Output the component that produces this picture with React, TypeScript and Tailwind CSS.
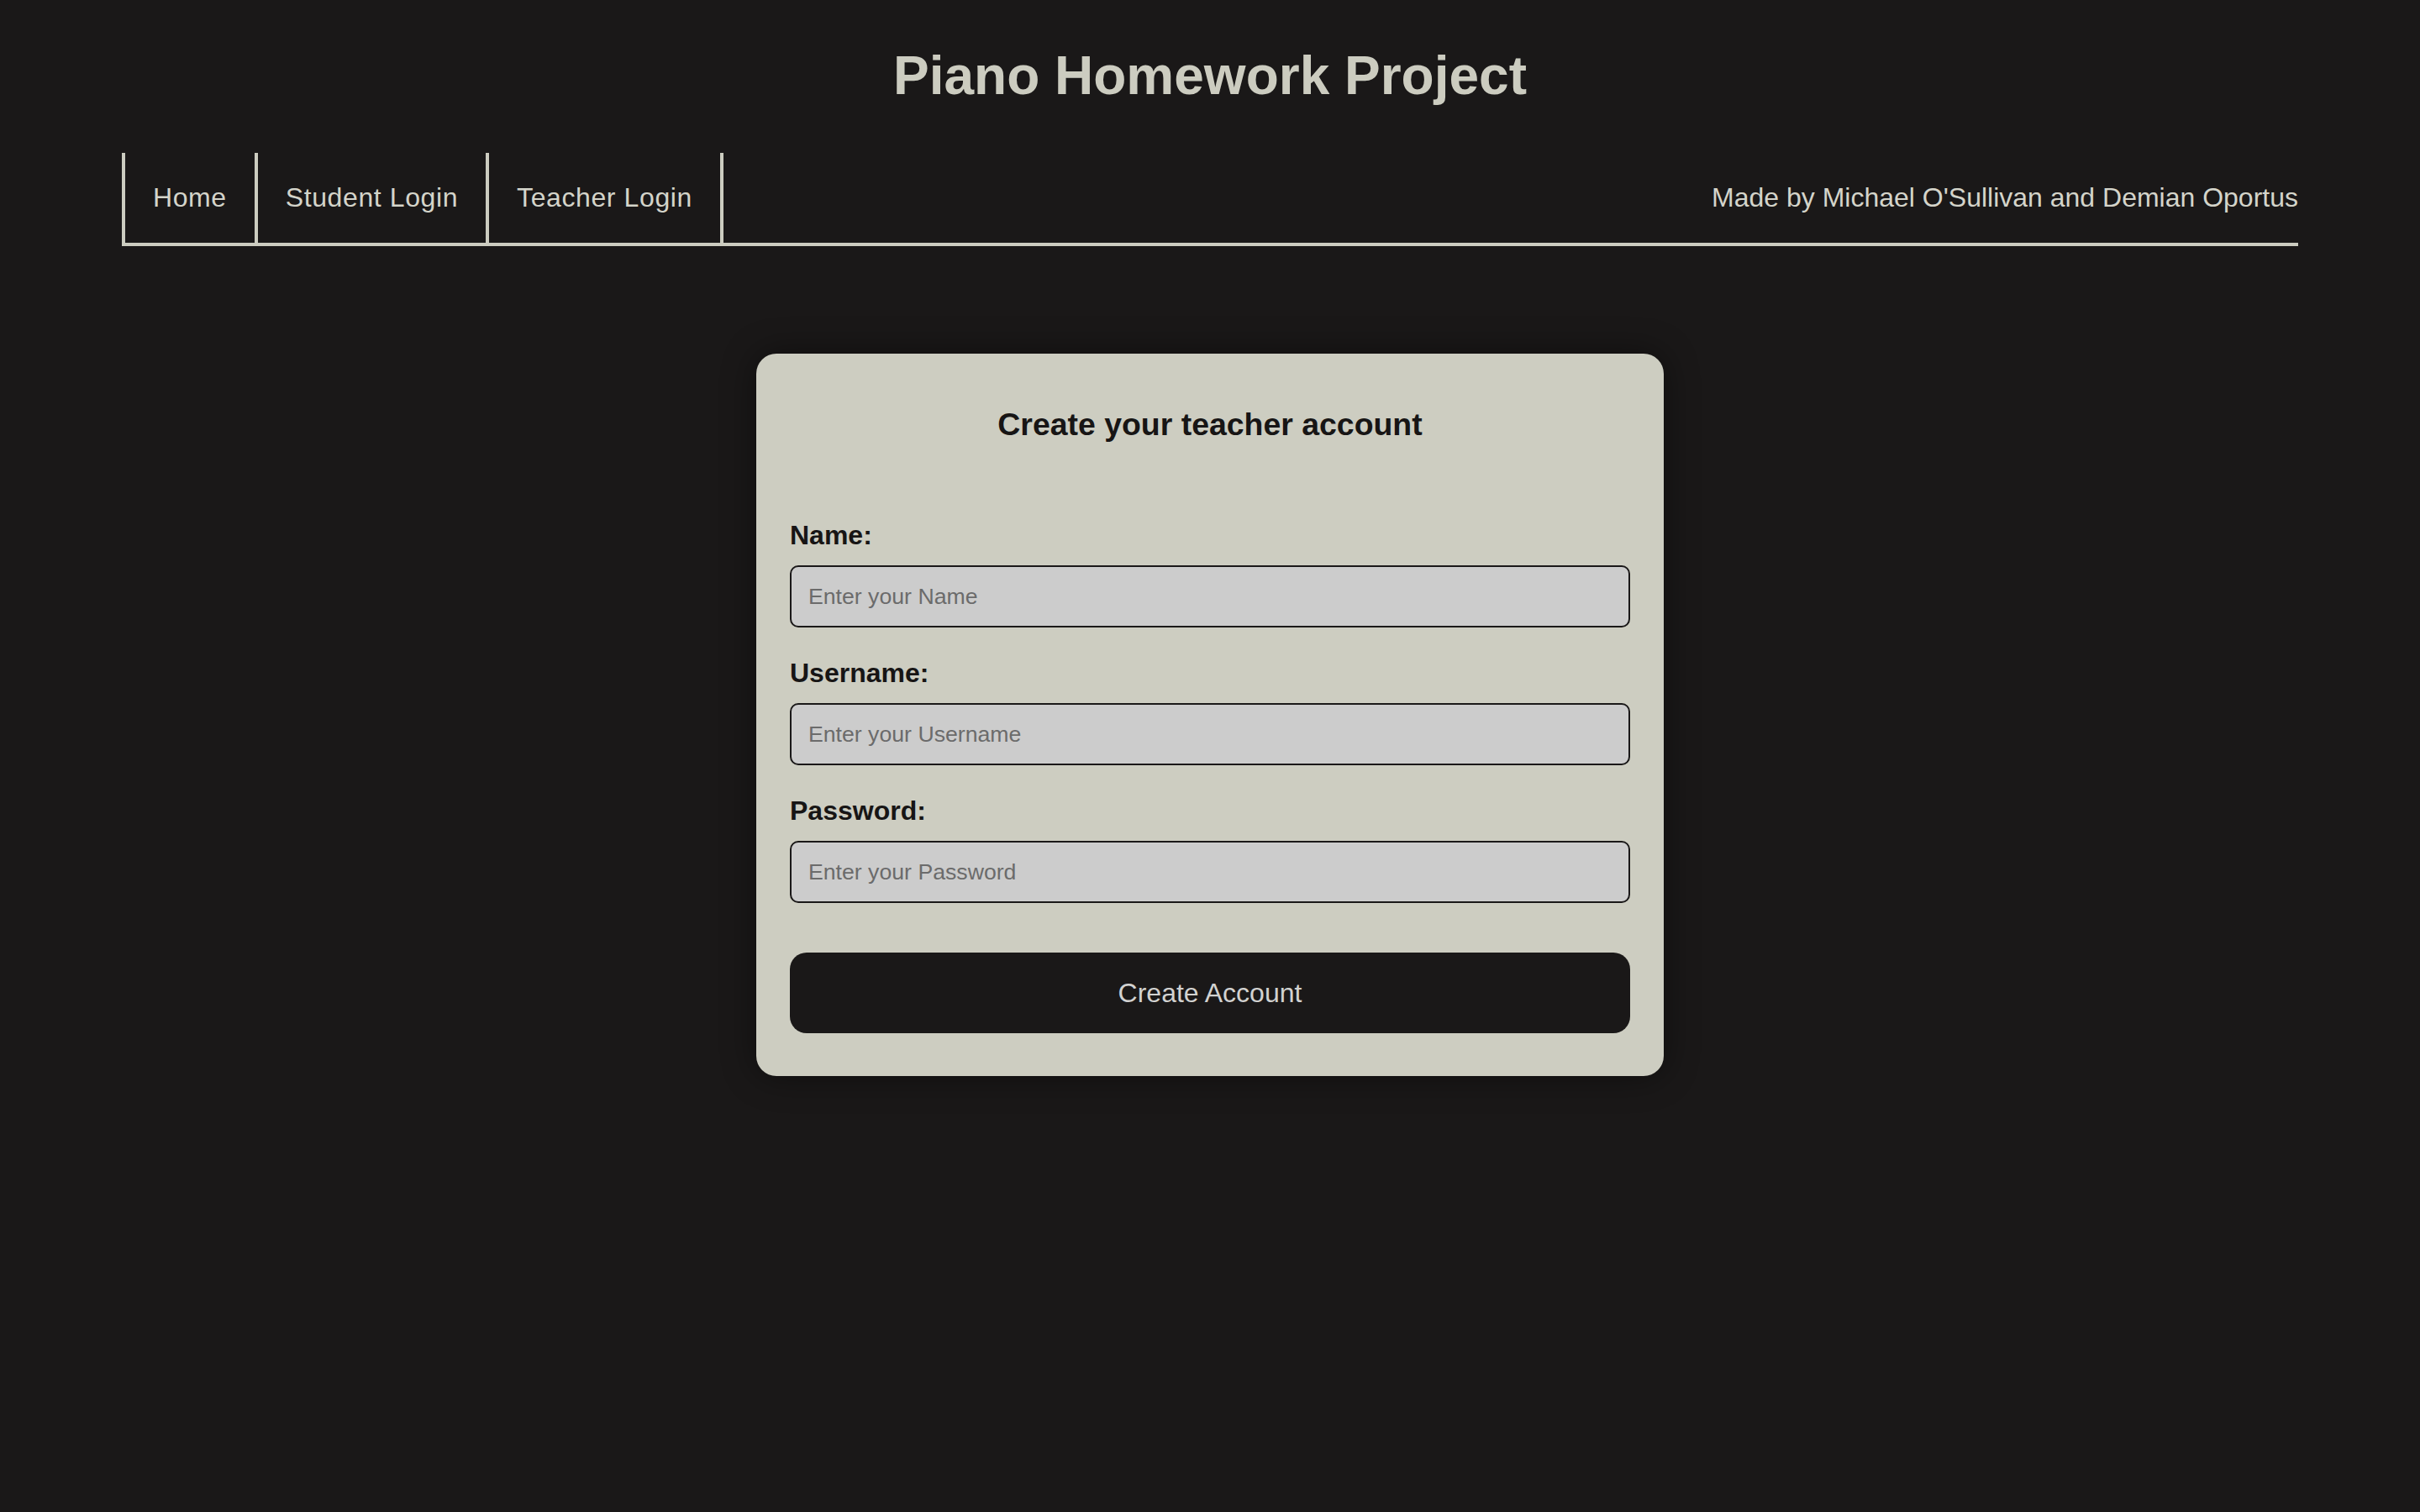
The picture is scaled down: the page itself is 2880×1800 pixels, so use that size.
import React, { useState } from 'react';

const navItems = ['Home', 'Student Login', 'Teacher Login'];

const fields = [
    { id: 'name', label: 'Name:', placeholder: 'Enter your Name', type: 'text' },
    { id: 'username', label: 'Username:', placeholder: 'Enter your Username', type: 'text' },
    { id: 'password', label: 'Password:', placeholder: 'Enter your Password', type: 'password' },
];

const App: React.FC = () => {
    const [values, setValues] = useState<Record<string, string>>({ name: '', username: '', password: '' });

    return (
        <div className="min-h-screen bg-[#1a1818] font-['Liberation_Sans',Arial,sans-serif] pt-[53px] pb-[200px]">
            <h1 className="text-center text-[64px] leading-[74px] font-bold text-[#ccccc0]">Piano Homework Project</h1>

            {/* Nav bar */}
            <nav className="mx-[145px] mt-[55px] flex border-b-4 border-[#ccccc0] text-[32px] leading-[37px] text-[#d4d4ca]">
                <div className="flex border-l-4 border-[#ccccc0]">
                    {navItems.map(item => (
                        <a key={item} href="#" className="px-[33px] py-[35px] tracking-[0.6px] border-r-4 border-[#ccccc0]">
                            {item}
                        </a>
                    ))}
                </div>
                <span className="ml-auto self-center">Made by Michael O'Sullivan and Demian Oportus</span>
            </nav>

            {/* Signup card */}
            <div className="mx-auto mt-[128px] w-[1080px] rounded-[24px] bg-[#cdcdc1] px-[40px] pt-[63px] pb-[51px] shadow-[0_0_40px_rgba(0,0,0,0.45)]">
                <h3 className="text-center text-[37.44px] leading-[43px] font-bold text-[#171515]">Create your teacher account</h3>

                <form className="mt-[92px] flex flex-col gap-[36px]" onSubmit={e => e.preventDefault()}>
                    {fields.map(f => (
                        <div key={f.id} className="flex flex-col gap-[17px]">
                            <label htmlFor={f.id} className="text-[32px] leading-[37px] font-bold text-[#171515]">{f.label}</label>
                            <input
                                id={f.id}
                                type={f.type}
                                value={values[f.id]}
                                onChange={e => setValues({ ...values, [f.id]: e.target.value })}
                                placeholder={f.placeholder}
                                className="h-[74px] w-full rounded-[10px] border-2 border-[#1a1818] bg-[#cccccc] px-[20px] text-[26.67px] text-[#1a1818] placeholder:text-[#6b6b6b] outline-none"
                            />
                        </div>
                    ))}
                    <button
                        type="submit"
                        className="mt-[23px] h-[96px] w-full rounded-[20px] bg-[#1a1818] text-[32px] text-[#d2d2d0]"
                    >
                        Create Account
                    </button>
                </form>
            </div>
        </div>
    );
};

export default App;
